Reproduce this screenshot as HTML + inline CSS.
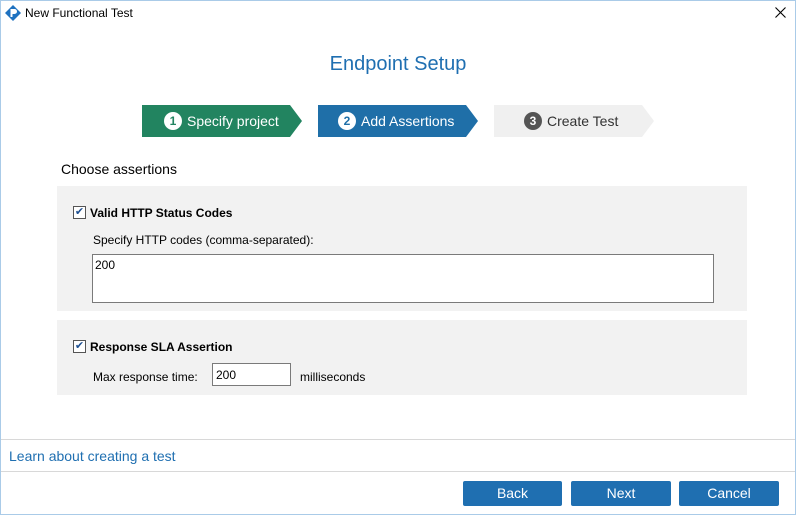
<html><head><style>
body{margin:0;width:796px;height:515px;background:#fff;font-family:"Liberation Sans",sans-serif;position:relative;overflow:hidden}
.a{position:absolute}
.win{position:absolute;left:0;top:0;width:794px;height:513px;border:1px solid #aacbe8}
.step{position:absolute;top:105px;height:32px;color:#fff;font-size:14px;line-height:32px}
.num{display:inline-block;width:18px;height:18px;border-radius:50%;background:#fff;font-size:12px;font-weight:bold;line-height:18px;text-align:center;margin-right:5px;vertical-align:1px}
.cb{position:absolute;width:11px;height:11px;border:1px solid #555;background:#fff;font-size:11px;line-height:11px;text-align:center;color:#1d4f91}
.btn{position:absolute;top:481px;height:25px;background:#1f6fb1;color:#fff;font-size:14px;line-height:25px;text-align:center;border-radius:2px}
.s{font-size:12px;color:#000}
</style></head><body>
<div class="win"></div>
<svg class="a" style="left:5px;top:5px" width="16" height="16" viewBox="0 0 16 16"><path d="M8 0L16 8L8 16L0 8Z" fill="#1f72c0"/><path d="M5.5 4h4a2.5 2.5 0 0 1 0 5H7.5v3h-2z" fill="#fff"/></svg>
<div class="a s" style="left:25px;top:6px">New Functional Test</div>
<svg class="a" style="left:775px;top:7px" width="11" height="11"><path d="M0.5 0.5L10.5 10.5M10.5 0.5L0.5 10.5" stroke="#000" stroke-width="1.1"/></svg>
<div class="a" style="left:0;width:796px;top:53px;text-align:center;font-size:20px;color:#1f6fb1">Endpoint Setup</div>
<svg class="a" style="left:142px;top:105px" width="520" height="32">
<path d="M0 0H148L160 16L148 32H0Z" fill="#228460"/>
<path d="M176 0H324L336 16L324 32H176Z" fill="#1f6fa8"/>
<path d="M352 0H500L512 16L500 32H352Z" fill="#f0f0f0"/>
</svg>
<div class="step" style="left:164px"><span class="num" style="color:#228460">1</span>Specify project</div>
<div class="step" style="left:338px"><span class="num" style="color:#1f6fa8">2</span>Add Assertions</div>
<div class="step" style="left:524px;color:#333"><span class="num" style="background:#555;color:#fff">3</span>Create Test</div>
<div class="a" style="left:61px;top:161px;font-size:14px">Choose assertions</div>
<div class="a" style="left:57px;top:186px;width:690px;height:125px;background:#f2f2f2"></div>
<div class="cb" style="left:73px;top:206px">✔</div>
<div class="a s" style="left:90px;top:206px;font-weight:bold">Valid HTTP Status Codes</div>
<div class="a s" style="left:93px;top:233px">Specify HTTP codes (comma-separated):</div>
<div class="a s" style="left:92px;top:254px;border:1px solid #7a7a7a;background:#fff;padding:3px 2px;box-sizing:border-box;height:49px;width:622px">200</div>
<div class="a" style="left:57px;top:320px;width:690px;height:75px;background:#f2f2f2"></div>
<div class="cb" style="left:73px;top:340px">✔</div>
<div class="a s" style="left:90px;top:340px;font-weight:bold">Response SLA Assertion</div>
<div class="a s" style="left:93px;top:370px">Max response time:</div>
<div class="a s" style="left:212px;top:363px;width:79px;height:23px;border:1px solid #7a7a7a;background:#fff;box-sizing:border-box;padding:4px 3px">200</div>
<div class="a s" style="left:300px;top:370px">milliseconds</div>
<div class="a" style="left:1px;top:439px;width:794px;height:1px;background:#d8d8d8"></div>
<div class="a" style="left:9px;top:448px;font-size:14px;color:#1f6fb1">Learn about creating a test</div>
<div class="a" style="left:1px;top:471px;width:794px;height:1px;background:#d8d8d8"></div>
<div class="btn" style="left:463px;width:99px">Back</div>
<div class="btn" style="left:571px;width:100px">Next</div>
<div class="btn" style="left:679px;width:100px">Cancel</div>
</body></html>
